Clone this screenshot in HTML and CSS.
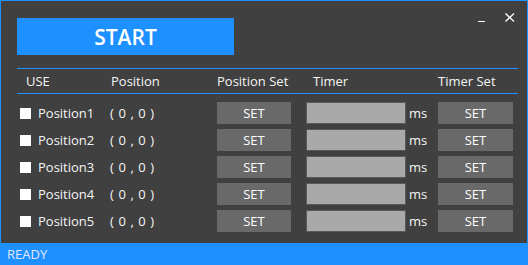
FILE: index.html
```html
<!DOCTYPE html>
<html lang="en">
<head>
<meta charset="UTF-8">
<meta name="viewport" content="width=device-width, initial-scale=1.0">
<title>Position Timer</title>
<link rel="stylesheet" href="styles.css">
</head>
<body>
<div class="window">
  <div class="main">
    <div class="top-bar">
      <button class="start-btn">START</button>
      <div class="win-ctrls">
        <svg class="ctrl-min" width="8" height="10" viewBox="0 0 8 10"><line x1="0" y1="9.5" x2="7" y2="9.5" stroke="#fff" stroke-width="1"/></svg>
        <svg class="ctrl-close" width="10" height="9" viewBox="0 0 10 9"><path d="M0.5 0.5 L9 8.5 M9 0.5 L0.5 8.5" stroke="#fff" stroke-width="1.3" fill="none"/></svg>
      </div>
    </div>

    <!-- column headers -->
    <div class="grid-head">
      <div class="col-use head-use">USE</div>
      <div class="col-pos">Position</div>
      <div class="col-pset">Position Set</div>
      <div class="col-timer head-timer">Timer</div>
      <div class="col-tset">Timer Set</div>
    </div>

    <div class="rows" id="rows"></div>
  </div>
  <div class="status">READY</div>
</div>

<script>
  // build the five position rows
  var rows = document.getElementById('rows');
  for (var i = 1; i <= 5; i++) {
    var row = document.createElement('div');
    row.className = 'row';
    row.innerHTML =
      '<div class="col-use"><span class="check"></span><span class="pos-name">Position' + i + '</span></div>' +
      '<div class="col-pos coords">( 0 , 0 )</div>' +
      '<div class="col-pset"><button class="set-btn">SET</button></div>' +
      '<div class="col-timer"><input class="timer-input" type="text"><span class="unit">ms</span></div>' +
      '<div class="col-tset"><button class="set-btn set-wide">SET</button></div>';
    rows.appendChild(row);
  }
</script>
</body>
</html>
```

FILE: styles.css
```css
body {
    margin: 0;
    padding: 0;
    font-family: "Open Sans", "Noto Sans", sans-serif;
    color: #f5f5f5;
}

.window {
    width: 528px;
    height: 265px;
    box-sizing: border-box;
    background-color: #404040;
    border: 1px solid #1e90ff;
    border-bottom: none;
    display: flex;
    flex-direction: column;
}

.main {
    flex: 1;
    padding: 10px 9px 0 16px;
}

.top-bar {
    display: flex;
    justify-content: space-between;
    align-items: flex-start;
}

.start-btn {
    margin-top: 7px;
    width: 217px;
    height: 37px;
    background-color: #1e90ff;
    border: none;
    color: #fff;
    font-family: "Open Sans", sans-serif;
    font-weight: 600;
    font-size: 21px;
    padding: 0;
}

.win-ctrls {
    display: flex;
    align-items: flex-end;
    gap: 19px;
    margin-right: 3px;
    padding-top: 1px;
}

/* header and rows share the same columns */
.grid-head,
.row {
    display: flex;
    align-items: center;
    font-size: 13px;
}

.grid-head {
    margin-top: 13px;
    height: 26px;
    box-sizing: border-box;
    border-top: 1px solid #1e90ff;
    border-bottom: 1px solid #1e90ff;
}

.col-use { width: 93px; display: flex; align-items: center; }
.col-pos { width: 107px; }
.col-pset { width: 89px; }
.col-timer { width: 132px; display: flex; align-items: center; }
.col-tset { width: 75px; }

.head-use { padding-left: 9px; box-sizing: border-box; }
.head-timer { padding-left: 7px; box-sizing: border-box; }
.grid-head .col-pos { padding-left: 1px; box-sizing: border-box; }

.rows {
    padding-top: 8px;
    display: flex;
    flex-direction: column;
    gap: 5px;
}

.row {
    height: 22px;
}

.check {
    width: 11px;
    height: 11px;
    background-color: #fff;
    margin-left: 3px;
    margin-right: 7px;
}

.coords {
    letter-spacing: 0.6px;
}

.set-btn {
    width: 74px;
    height: 22px;
    background-color: #696969;
    border: none;
    color: #fff;
    font-family: "Open Sans", sans-serif;
    font-size: 13px;
    padding: 0;
}

.set-wide {
    width: 75px;
}

.timer-input {
    width: 100px;
    height: 22px;
    box-sizing: border-box;
    background-color: #a9a9a9;
    border: 1px solid #5a5a5a;
    margin: 0 3px 0 0;
    padding: 0;
}

.status {
    height: 22px;
    margin: 0 -1px;
    background-color: #1e90ff;
    color: #e4e8ff;
    font-size: 13px;
    line-height: 22px;
    padding-left: 7px;
}
```
